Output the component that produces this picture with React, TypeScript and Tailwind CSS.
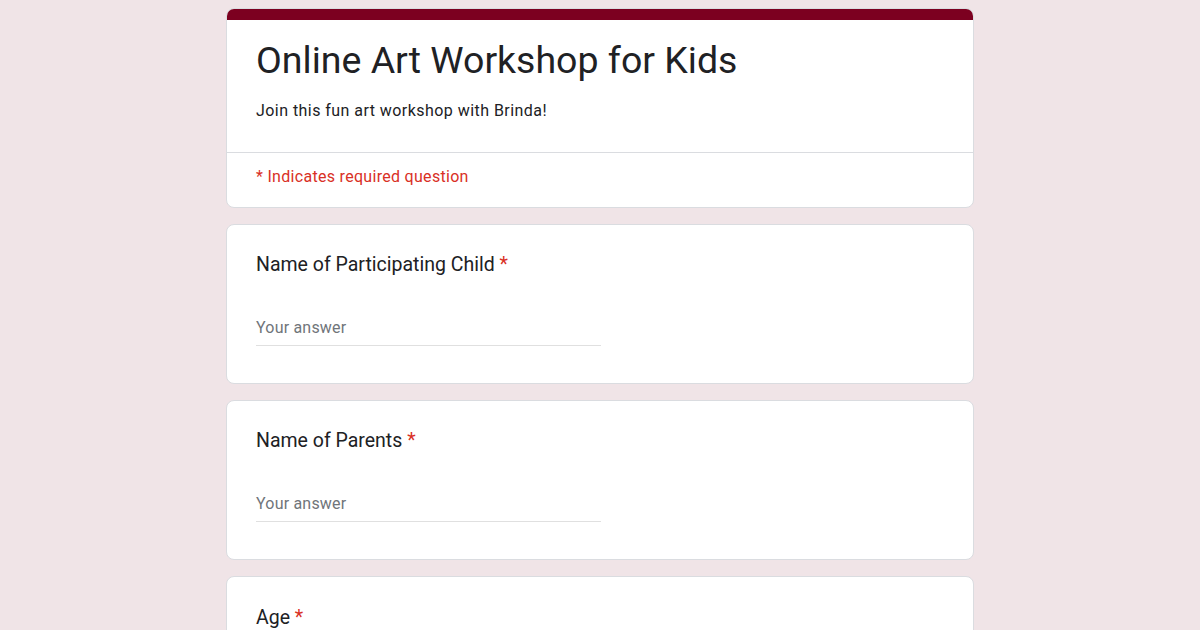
export default function App() {
  const questions = ["Name of Participating Child", "Name of Parents"];

  return (
    <div className="min-h-screen bg-[#f0e4e7] pt-2 font-['Roboto',sans-serif]">
      <div className="mx-auto flex w-[748px] flex-col gap-4">
        {/* header card */}
        <div className="overflow-hidden rounded-lg border border-[#dadce0] bg-white">
          <div className="h-[11px] bg-[#7c0020]" />
          <div className="px-[29px] pt-4 pb-[29px]">
            <h1 className="text-[37.5px] leading-[48px] text-[#202124]">Online Art Workshop for Kids</h1>
            <p className="mt-[15px] text-[16px] leading-6 tracking-[0.45px] text-[#202124]">Join this fun art workshop with Brinda!</p>
          </div>
          <div className="border-t border-[#dadce0] px-[29px] pt-3 pb-[18px] text-[16px] leading-6 tracking-[0.3px] text-[#d93025]">
            * Indicates required question
          </div>
        </div>

        {questions.map((q) => (
          <div key={q} className="h-[160px] rounded-lg border border-[#dadce0] bg-white px-[29px] pt-[26px]">
            <div className="text-[19.5px] leading-7 text-[#202124]">
              {q} <span className="text-[#d93025]">*</span>
            </div>
            <div className="mt-[37px] w-[345px] border-b border-[#e0e0e0] pb-[5px] text-[16px] leading-6 tracking-[0.2px] text-[#70757a]">
              Your answer
            </div>
          </div>
        ))}

        <div className="h-[160px] rounded-lg border border-[#dadce0] bg-white px-[29px] pt-[27px]">
          <div className="text-[19.5px] leading-7 text-[#202124]">
            Age <span className="text-[#d93025]">*</span>
          </div>
        </div>
      </div>
    </div>
  );
}
